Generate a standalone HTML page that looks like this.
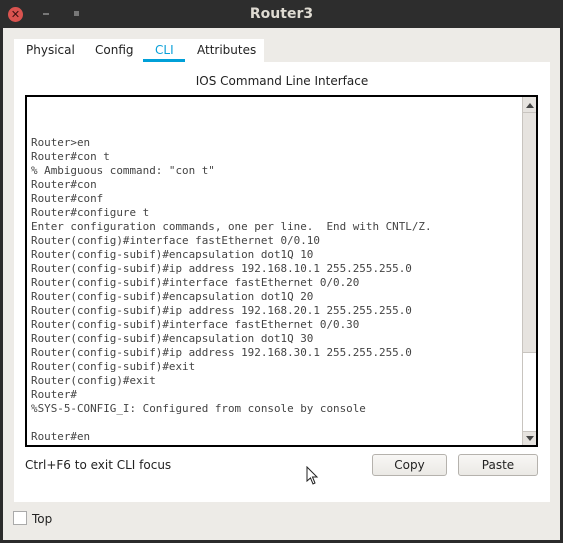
<!DOCTYPE html>
<html><head><style>
*{margin:0;padding:0;box-sizing:border-box}
body{width:563px;height:543px;background:#2b2b2b;font-family:"DejaVu Sans","Liberation Sans",sans-serif;position:relative;overflow:hidden}
.abs{position:absolute}
.title{left:0;top:0;width:563px;height:28px;background:#2d2d2d;color:#dfdbd2;font-size:14px;font-weight:bold;text-align:center;line-height:28px}
.body{left:3px;top:28px;width:557px;height:512px;background:#edebe7}
.tabs{left:14px;top:39px;width:250px;height:24px;background:#fff;font-size:12px;color:#222}
.panel{left:14px;top:62px;width:536px;height:440px;background:#fff}
.term{left:25px;top:95px;width:513px;height:352px;border:2px solid #000;background:#fff}
pre{position:absolute;left:4px;top:39px;font-family:"DejaVu Sans Mono","Liberation Mono",monospace;font-size:10.92px;line-height:14px;color:#444}
.sb{right:0;top:0;width:14px;height:348px;background:#e6e3df;border-left:1px solid #c8c4bf}
.btn{top:454px;height:22px;border:1px solid #b5b2ad;border-radius:3px;background:linear-gradient(#f8f7f5,#ebe9e5);font-size:12px;color:#222;text-align:center;line-height:21px}
</style></head><body>
<div class="abs title">Router3</div>
<div class="abs" style="left:8px;top:7px;width:15px;height:15px;border-radius:50%;background:#d9534f;color:#3a1010;font-size:11px;line-height:15px;text-align:center;font-weight:bold">✕</div>
<div class="abs" style="left:43px;top:13px;width:6px;height:2px;background:#777"></div>
<div class="abs" style="left:74px;top:11px;width:5px;height:5px;background:#777"></div>
<div class="abs body"></div>
<div class="abs tabs">
<span class="abs" style="left:12px;top:4px">Physical</span>
<span class="abs" style="left:81px;top:4px">Config</span>
<span class="abs" style="left:141px;top:4px;color:#0aa0d8">CLI</span>
<span class="abs" style="left:183px;top:4px">Attributes</span>
</div>
<div class="abs panel"></div>
<div class="abs" style="left:143px;top:59px;width:42px;height:3px;background:#00a0d8"></div>
<div class="abs" style="left:14px;top:74px;width:536px;text-align:center;font-size:12px;color:#222">IOS Command Line Interface</div>
<div class="abs term">
<pre>Router&gt;en
Router#con t
% Ambiguous command: "con t"
Router#con
Router#conf
Router#configure t
Enter configuration commands, one per line.  End with CNTL/Z.
Router(config)#interface fastEthernet 0/0.10
Router(config-subif)#encapsulation dot1Q 10
Router(config-subif)#ip address 192.168.10.1 255.255.255.0
Router(config-subif)#interface fastEthernet 0/0.20
Router(config-subif)#encapsulation dot1Q 20
Router(config-subif)#ip address 192.168.20.1 255.255.255.0
Router(config-subif)#interface fastEthernet 0/0.30
Router(config-subif)#encapsulation dot1Q 30
Router(config-subif)#ip address 192.168.30.1 255.255.255.0
Router(config-subif)#exit
Router(config)#exit
Router#
%SYS-5-CONFIG_I: Configured from console by console

Router#en</pre>
<div class="abs sb">
<div class="abs" style="left:3px;top:6px;width:0;height:0;border-left:4px solid transparent;border-right:4px solid transparent;border-bottom:5px solid #444"></div>
<div class="abs" style="left:0;top:15px;width:13px;height:1px;background:#c8c4bf"></div>
<div class="abs" style="left:0;top:255px;width:13px;height:80px;background:#fff;border-top:1px solid #c8c4bf;border-bottom:1px solid #c8c4bf"></div>
<div class="abs" style="left:3px;top:339px;width:0;height:0;border-left:4px solid transparent;border-right:4px solid transparent;border-top:5px solid #444"></div>
</div>
</div>
<div class="abs" style="left:25px;top:458px;font-size:12px;color:#222">Ctrl+F6 to exit CLI focus</div>
<div class="abs btn" style="left:372px;width:75px">Copy</div>
<div class="abs btn" style="left:458px;width:80px">Paste</div>
<div class="abs" style="left:13px;top:511px;width:14px;height:14px;border:1px solid #aaa;background:#fff"></div>
<div class="abs" style="left:32px;top:512px;font-size:12px;color:#222">Top</div>
<svg class="abs" style="left:306px;top:466px" width="14" height="20"><path d="M1 1 L1 15 L4.5 12 L7 18 L9 17 L6.5 11 L11 11 Z" fill="#fff" stroke="#222" stroke-width="1"/></svg>
</body></html>
